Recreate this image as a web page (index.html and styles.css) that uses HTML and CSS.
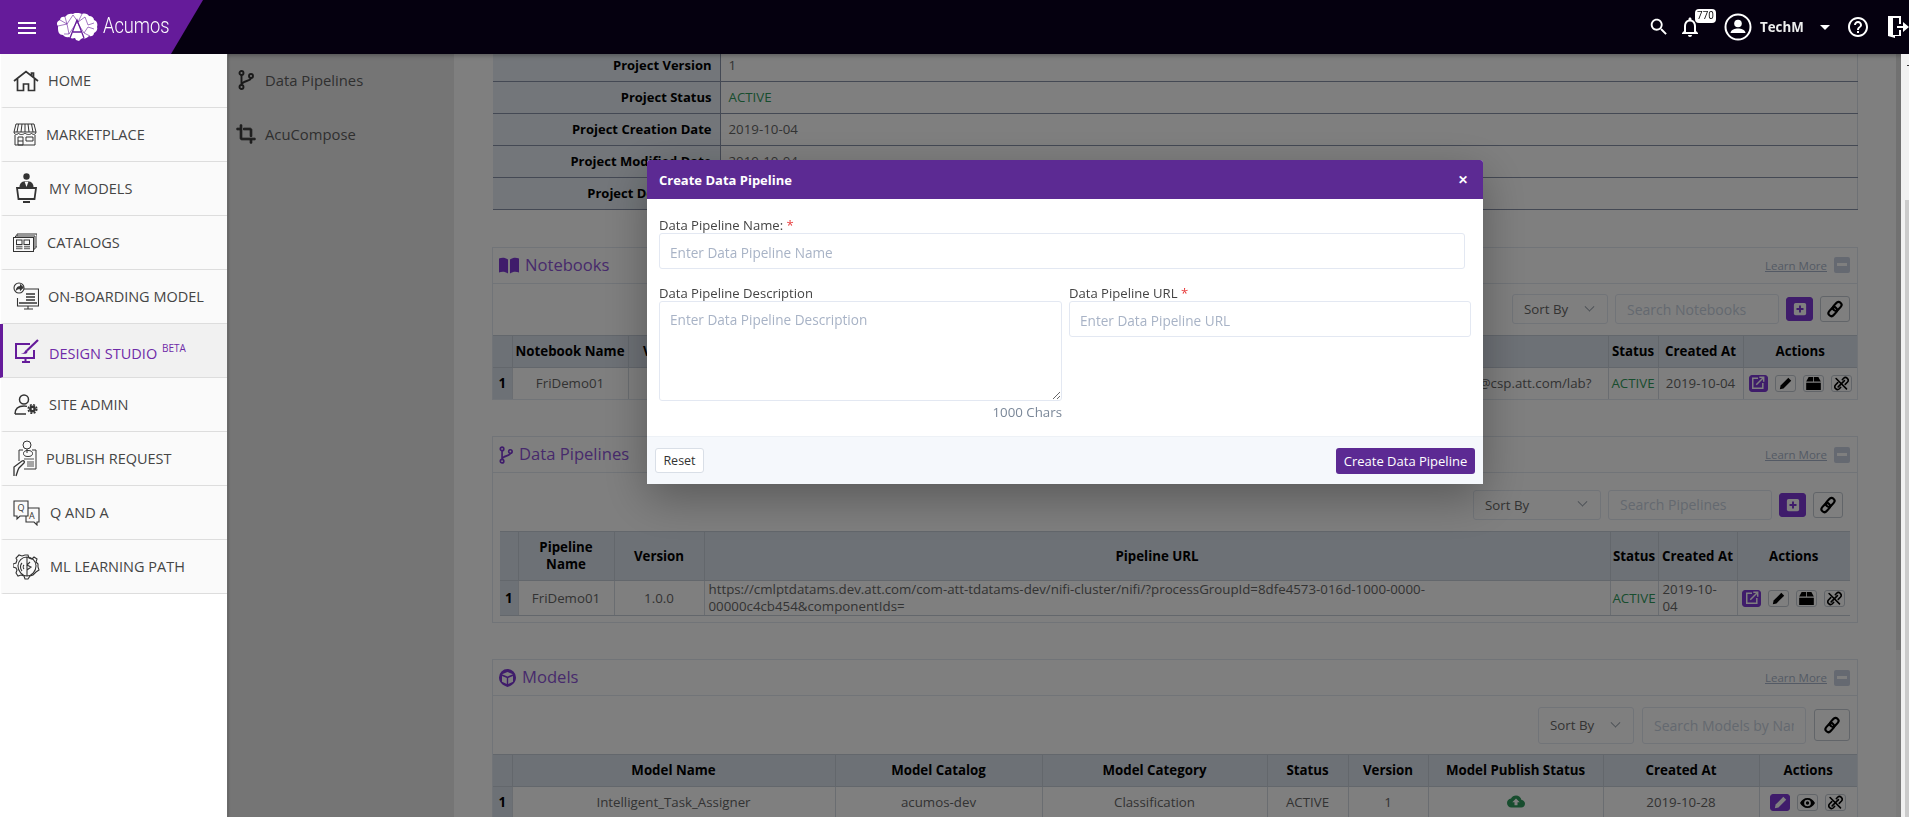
FILE: index.html
```html
<!DOCTYPE html>
<html lang="en">
<head>
<meta charset="utf-8">
<title>Acumos - Create Data Pipeline</title>
<link rel="stylesheet" href="styles.css">
</head>
<body>
<svg class="defs" width="0" height="0" aria-hidden="true">
  <symbol id="i-branch" viewBox="0 0 16 20"><g fill="none" stroke="currentColor" stroke-width="1.9"><circle cx="3.5" cy="3" r="2"/><circle cx="3.5" cy="17" r="2"/><circle cx="13" cy="6" r="2"/><path d="M3.5 5v10M13 8c0 3.5-9.5 2.5-9.5 7"/></g></symbol>
  <symbol id="i-link" viewBox="0 0 20 20"><g fill="none" stroke="currentColor" stroke-width="2.4"><rect x="9.2" y="1.6" width="6.6" height="11" rx="3.3" transform="rotate(42 12.5 7)"/><rect x="4.2" y="7.4" width="6.6" height="11" rx="3.3" transform="rotate(42 7.5 13)"/></g></symbol>
  <symbol id="i-plus" viewBox="0 0 16 16"><rect x="1" y="1" width="14" height="14" rx="2" fill="#fff"/><path d="M8 4v8M4 8h8" stroke="#7e38d6" stroke-width="2.2"/></symbol>
  <symbol id="i-open" viewBox="0 0 16 16"><g fill="none" stroke="#fff" stroke-width="1.7"><path d="M8 2.5H2v11.5h11.5V8"/><path d="M6 10 14 2M9.5 1.5h5v5"/></g></symbol>
  <symbol id="i-pencil" viewBox="0 0 16 16"><path d="M11.500 1 15 4.500 5.500 14 1 15l1-4.500z" fill="currentColor"/></symbol>
  <symbol id="i-box" viewBox="0 0 18 16"><path d="M3 0h5.500v5.500H0zM9.500 0H15l3 5.500H9.500zM0 7h18v9H0z" fill="currentColor"/></symbol>
  <symbol id="i-unlink" viewBox="0 0 18 18"><g fill="none" stroke="currentColor" stroke-width="1.900" stroke-linecap="round"><path d="M2.500 3 15 15.500"/><path d="M10 4.500l1.500-1.800a3.300 3.300 0 0 1 4.700 4.600L13.500 10"/><path d="M8 13.500l-1.500 1.800a3.300 3.300 0 0 1-4.700-4.600L4.500 8"/><path d="M12.500 5.500 5 13"/></g></symbol>
  <symbol id="i-eye" viewBox="0 0 18 12"><path d="M9 0C5 0 1.800 2.500 0 6c1.800 3.500 5 6 9 6s7.200-2.500 9-6c-1.800-3.500-5-6-9-6zm0 10a4 4 0 1 1 0-8 4 4 0 0 1 0 8zm0-6a2 2 0 1 0 0 4 2 2 0 0 0 0-4z" fill="currentColor"/></symbol>
</svg>

<header class="topbar">
  <div class="brand">
    <svg class="burger" width="24" height="24" viewBox="0 0 24 24"><path fill="#fff" d="M3 18h18v-2H3v2zm0-5h18v-2H3v2zm0-7v2h18V6H3z"/></svg>
    <svg class="brain" width="42" height="28" viewBox="0 0 42 28">
      <path fill="#fff" d="M2 13c-2-2-1-5 2-6 0-3 3-4 5-3 2-3 5-4 8-3 3-2 7-1 9 0 3-1 6 0 7 2 3 0 5 2 5 4 3 1 4 4 3 7 1 3-1 5-3 6 0 2-2 4-5 3-2 2-4 3-6 2l-2 1-2 2-3-1-1-2c-3 1-5 0-6-1-3 1-5-1-6-2-4 0-5-3-5-7z"/>
      <g fill="none" stroke="#651b9a" stroke-width=".6"><path d="M4 7l7 4 6-9 5 7 7-5 3 8 6-2M2 13l9-2 2 10 8-12 7 11 4-6 6 2M9 4l2 7M26 1l-4 8M8 21l5 0M28 20l6 3"/></g>
      <path d="M14 25 21 7l7 18M17 19h8" fill="none" stroke="#651b9a" stroke-width="1.300"/>
    </svg>
    <span class="wordmark">Acumos</span>
  </div>
  <div class="top-tools">
    <svg class="t-search" width="22" height="22" viewBox="0 0 24 24"><path fill="#fff" d="M15.500 14h-.79l-.28-.27C15.410 12.590 16 11.110 16 9.500 16 5.910 13.090 3 9.500 3S3 5.910 3 9.500 5.910 16 9.500 16c1.610 0 3.090-.59 4.230-1.570l.27.28v.79l5 4.990L20.490 19l-4.990-5zm-6 0C7.010 14 5 11.990 5 9.500S7.010 5 9.500 5 14 7.010 14 9.500 11.990 14 9.500 14z"/></svg>
    <div class="t-bell">
      <svg width="24" height="24" viewBox="0 0 24 24"><path fill="#fff" d="M12 22c1.100 0 2-.9 2-2h-4c0 1.100.89 2 2 2zm6-6v-5c0-3.070-1.640-5.640-4.500-6.320V4c0-.83-.67-1.500-1.500-1.500s-1.500.67-1.500 1.500v.68C7.630 5.360 6 7.920 6 11v5l-2 2v1h16v-1l-2-2zm-2 1H8v-6c0-2.480 1.510-4.500 4-4.500s4 2.020 4 4.500v6z"/></svg>
      <span class="badge">770</span>
    </div>
    <svg class="t-user" width="28" height="28" viewBox="0 0 28 28"><circle cx="14" cy="14" r="12.500" fill="none" stroke="#fff" stroke-width="2"/><circle cx="14" cy="10.500" r="3.800" fill="#fff"/><path fill="#fff" d="M6.500 20c.5-3.500 4.500-4.500 7.500-4.500s7 1 7.500 4.500z"/></svg>
    <span class="t-name">TechM</span>
    <span class="t-caret"></span>
    <svg class="t-help" width="24" height="24" viewBox="0 0 24 24"><path fill="#fff" d="M11 18h2v-2h-2v2zm1-16C6.480 2 2 6.480 2 12s4.480 10 10 10 10-4.480 10-10S17.520 2 12 2zm0 18c-4.410 0-8-3.590-8-8s3.590-8 8-8 8 3.590 8 8-3.590 8-8 8zm0-14c-2.210 0-4 1.790-4 4h2c0-1.100.9-2 2-2s2 .9 2 2c0 2-3 1.750-3 5h2c0-2.250 3-2.500 3-5 0-2.210-1.790-4-4-4z"/></svg>
    <svg class="t-exit" width="21" height="22" viewBox="0 0 21 22"><path fill="#fff" d="M0 0h13v8h-2V2H5v17h6v-5h2v6H7v2l-7-2z"/><path fill="#fff" d="M9 10h6V6l6 5-6 5v-4H9z"/></svg>
  </div>
</header>

<div class="stage">
  <nav class="sidebar">
    <a class="nav-item"><span class="nav-ic"><svg width="26" height="22" viewBox="0 0 26 22" fill="none" stroke="#333" stroke-width="1.700"><path d="M1 11 13 1.500 25 11M4.500 9v11.500h6V14h5v6.500h6V9M18.500 5V3h2v4"/></svg></span><span class="nav-tx o2">HOME</span></a>
    <a class="nav-item"><span class="nav-ic"><svg width="24" height="23" viewBox="0 0 24 23" fill="none" stroke="#333" stroke-width="1"><path d="M3 1h18l2 8H1zM5.500 1 4 9M9 1l-1 8M12 1v8M15 1l1 8M18.500 1 20 9M1 9c0 3 4 3 4.500 1 .5 2 5 2 6.500 0 1.500 2 6 2 6.500 0 .5 2 4.500 2 4.500-1M2 12v10h20V12M5 14h5v8H5zM5 18h5M13 14h7v4h-7z"/></svg></span><span class="nav-tx o0">MARKETPLACE</span></a>
    <a class="nav-item"><span class="nav-ic"><svg class="ind3" width="21" height="31" viewBox="0 0 21 31"><circle cx="10.500" cy="3.500" r="3.200" fill="#333"/><path d="M3.500 14c0-4 3-6 7-6s7 2 7 6z" fill="#333"/><path d="M8.500 8.500h4L10.500 14z" fill="#fafafa"/><path d="M1 15h19l-1.500 11h-16z" fill="#fafafa" stroke="#333" stroke-width="1.800"/><path d="M7 29h7" stroke="#333" stroke-width="2"/></svg></span><span class="nav-tx o3">MY MODELS</span></a>
    <a class="nav-item"><span class="nav-ic"><svg width="24" height="19" viewBox="0 0 24 19" fill="none" stroke="#333" stroke-width="1"><path d="M4 3V1h20v13h-1.500M2.500 4.500V3H22v13h-1"/><rect x=".5" y="4.500" width="20" height="14"/><rect x="3.500" y="7" width="5.500" height="4.500"/><rect x="11" y="7" width="5.500" height="4.500"/><path d="M3 13.500h6.500M3 15.500h6.500M11 13.500h6M11 15.500h6" stroke="#777" stroke-width="1.300"/></svg></span><span class="nav-tx o1">CATALOGS</span></a>
    <a class="nav-item"><span class="nav-ic"><svg width="26" height="30" viewBox="0 0 26 30" fill="none" stroke="#333" stroke-width="1.100"><path d="M11 7h14.500v17h-21V16"/><circle cx="6" cy="6" r="5" fill="#fafafa"/><path d="M3.500 7.500c.5-2 2-3 4-3V3l2.500 2.500L7.500 8V6.500c-1.500 0-3 0-4 1z" fill="#333"/><path d="M13 12h9M13 15h9M13 18h9M6 21h18" stroke-width="1.300"/><path d="M11 27h9M15 24v3"/></svg></span><span class="nav-tx o2">ON-BOARDING MODEL</span></a>
    <a class="nav-item active"><span class="nav-ic"><svg class="ind2" width="24" height="24" viewBox="0 0 24 24" fill="none" stroke="#651b9a" stroke-width="2"><path d="M15 5H1v14h18v-8"/><path d="M7 23h8M10.500 19v4"/><path d="M23 1 12 11.500" stroke-width="2.200"/><path d="M6 14c2.500.5 3.500-.5 4-2 1-2 3-.5 2.500 1-.5 2-4 2.500-6.500 1z" fill="#651b9a" stroke="none"/></svg></span><span class="nav-tx o3">DESIGN STUDIO <sup class="beta">BETA</sup></span></a>
    <a class="nav-item"><span class="nav-ic"><svg class="ind1" width="24" height="21" viewBox="0 0 24 21" fill="none" stroke="#333" stroke-width="1.500"><circle cx="10" cy="5.500" r="4.500"/><path d="M1 20c0-6 4-8 9-8 1 0 2 .1 3 .4M1 20h11"/><circle cx="18.500" cy="15" r="2.200" stroke-width="2.500"/><circle cx="18.500" cy="15" r="4.300" stroke-width="1.500" stroke-dasharray="2 1.400"/></svg></span><span class="nav-tx o3">SITE ADMIN</span></a>
    <a class="nav-item"><span class="nav-ic"><svg width="24" height="37" viewBox="0 0 24 37" fill="none" stroke="#333" stroke-width="1"><circle cx="14" cy="5" r="4"/><ellipse cx="15" cy="13.500" rx="4.500" ry="3"/><path d="M14 9v4M6 10h4M19 10h4v19H11M6 10v11"/><path d="M11 19h10M14 22h7M14 24h7M14 26h7" stroke="#888" stroke-width="1.300"/><path d="M1 36v-9l8-6c2-1 3 1 2 2l-5 5-1 2-2 6" stroke-width="1.300"/></svg></span><span class="nav-tx o0">PUBLISH REQUEST</span></a>
    <a class="nav-item"><span class="nav-ic"><svg width="27" height="26" viewBox="0 0 27 26" fill="none" stroke="#333" stroke-width="1.100"><path d="M1 1h14v15H7l-3 3v-3H1zM15 8h11v14h-2v3l-3-3h-8v-6"/><text x="4.500" y="11" class="ic-tx">Q</text><text x="16" y="19" class="ic-tx">A</text></svg></span><span class="nav-tx o4">Q AND A</span></a>
    <a class="nav-item"><span class="nav-ic"><svg width="28" height="26" viewBox="0 0 28 26" fill="none" stroke="#333" stroke-width="1.100"><path d="M12 1h3l1 3 3 1 2-2 3 2-1 3 2 2v3l1 3-3 2-3 3-3 1-2 3h-3l-1-3-3-1-3 1-2-3 1-3-1-2-3-1v-3l3-1 1-3-1-2 3-3 3 1z"/><path d="M14 3c-5 0-9 4-9 9s4 10 9 10M14 3c5 0 9 4 9 9s-4 10-9 10V3M17 8l-3 3 4 2-4 3M9 9c-2 2-2 6 0 8M11 11c-1 1-1 3 0 4"/></svg></span><span class="nav-tx o4">ML LEARNING PATH</span></a>
  </nav>

  <aside class="subnav">
    <a class="sub-item"><svg class="sub-ic branch" width="16" height="20"><use href="#i-branch"/></svg>Data Pipelines</a>
    <a class="sub-item"><svg class="sub-ic crop" width="20" height="20" viewBox="0 0 24 24"><path fill="currentColor" stroke="currentColor" stroke-width="1.100" d="M17 15h2V7c0-1.100-.9-2-2-2H9v2h8v8zM7 17V1H5v4H1v2h4v10c0 1.100.9 2 2 2h10v4h2v-4h4v-2H7z"/></svg>AcuCompose</a>
  </aside>

  <main class="main">
    <div class="main-inner">
      <table class="info">
        <tr><th>Project Version</th><td>1</td></tr>
        <tr><th>Project Status</th><td class="ok">ACTIVE</td></tr>
        <tr><th>Project Creation Date</th><td>2019-10-04</td></tr>
        <tr><th>Project Modified Date</th><td>2019-10-04</td></tr>
        <tr><th>Project Description</th><td></td></tr>
      </table>

      <section class="card">
        <div class="card-head">
          <h2 class="card-title"><svg class="ttl-ic" width="20" height="17" viewBox="0 0 20 16"><path fill="currentColor" d="M0 1c3-1 6-1 9 1v14c-3-2-6-2-9-1zM20 1c-3-1-6-1-9 1v14c3-2 6-2 9-1z"/></svg>Notebooks</h2>
          <a class="learn">Learn More</a><span class="collapse"></span>
        </div>
        <div class="tools tools-nb">
          <div class="select s-96">Sort By<span class="chev"></span></div>
          <input class="search" placeholder="Search Notebooks">
          <button class="tool primary"><svg width="14" height="14"><use href="#i-plus"/></svg></button>
          <button class="tool"><svg width="18" height="18"><use href="#i-link"/></svg></button>
        </div>
        <table class="grid nb flush">
          <colgroup><col class="c19"><col class="c116"><col class="c80"><col><col class="c50"><col class="c85"><col class="c114"></colgroup>
          <thead><tr><th></th><th>Notebook Name</th><th>Version</th><th>Notebook URL</th><th>Status</th><th>Created At</th><th>Actions</th></tr></thead>
          <tbody><tr><th class="num">1</th><td>FriDemo01</td><td>1.0.0</td><td class="right">https://jupyterhub@csp.att.com/lab?</td><td class="ok tight">ACTIVE</td><td>2019-10-04</td><td>
            <div class="acts"><span class="act purple"><svg width="14" height="14"><use href="#i-open"/></svg></span><span class="act"><svg width="13" height="13"><use href="#i-pencil"/></svg></span><span class="act"><svg width="15" height="13"><use href="#i-box"/></svg></span><span class="act"><svg width="15" height="15"><use href="#i-unlink"/></svg></span></div>
          </td></tr></tbody>
        </table>
      </section>

      <section class="card padded">
        <div class="card-head">
          <h2 class="card-title"><svg class="ttl-ic" width="14" height="18"><use href="#i-branch"/></svg>Data Pipelines</h2>
          <a class="learn">Learn More</a><span class="collapse"></span>
        </div>
        <div class="tools tools-dp">
          <div class="select s-128">Sort By<span class="chev"></span></div>
          <input class="search" placeholder="Search Pipelines">
          <button class="tool primary"><svg width="14" height="14"><use href="#i-plus"/></svg></button>
          <button class="tool"><svg width="18" height="18"><use href="#i-link"/></svg></button>
        </div>
        <table class="grid dp">
          <colgroup><col class="c18"><col class="c96"><col class="c90"><col><col class="c48"><col class="c79"><col class="c113"></colgroup>
          <thead><tr><th></th><th>Pipeline<br>Name</th><th>Version</th><th>Pipeline URL</th><th>Status</th><th>Created At</th><th>Actions</th></tr></thead>
          <tbody><tr><th class="num">1</th><td>FriDemo01</td><td>1.0.0</td><td class="left">https://cmlptdatams.dev.att.com/com-att-tdatams-dev/nifi-cluster/nifi/?processGroupId=8dfe4573-016d-1000-0000-<br>00000c4cb454&amp;componentIds=</td><td class="ok tight">ACTIVE</td><td class="left">2019-10-<br>04</td><td>
            <div class="acts"><span class="act purple"><svg width="14" height="14"><use href="#i-open"/></svg></span><span class="act"><svg width="13" height="13"><use href="#i-pencil"/></svg></span><span class="act"><svg width="15" height="13"><use href="#i-box"/></svg></span><span class="act"><svg width="15" height="15"><use href="#i-unlink"/></svg></span></div>
          </td></tr></tbody>
        </table>
      </section>

      <section class="card">
        <div class="card-head">
          <h2 class="card-title"><svg class="ttl-ic" width="17" height="18" viewBox="0 0 17 18"><path fill="currentColor" d="M8.500 0a8.500 8.500 0 0 1 8.500 8.500c0 5-4 8-8.500 9.500C4 16.500 0 13.500 0 8.500A8.500 8.500 0 0 1 8.500 0z"/><path fill="#fff" d="M8.500 3 14 5.200 8.500 7.500 3 5.200zM3 7l4.800 2v6L3 12.800zM14 7 9.200 9v6l4.800-2.200z"/></svg>Models</h2>
          <a class="learn">Learn More</a><span class="collapse"></span>
        </div>
        <div class="tools tools-md">
          <div class="select s-96 tall">Sort By<span class="chev"></span></div>
          <input class="search tall" placeholder="Search Models by Name">
          <button class="tool wide"><svg width="18" height="18"><use href="#i-link"/></svg></button>
        </div>
        <table class="grid md flush">
          <colgroup><col class="c19"><col class="c323"><col class="c207"><col class="c225"><col class="c81"><col class="c80"><col class="c175"><col class="c156"><col></colgroup>
          <thead><tr><th></th><th>Model Name</th><th>Model Catalog</th><th>Model Category</th><th>Status</th><th>Version</th><th>Model Publish Status</th><th>Created At</th><th>Actions</th></tr></thead>
          <tbody><tr><th class="num">1</th><td>Intelligent_Task_Assigner</td><td>acumos-dev</td><td>Classification</td><td>ACTIVE</td><td>1</td><td><svg class="cloud" width="18" height="16" viewBox="0 0 24 20"><path fill="currentColor" d="M19.350 6.040C18.670 2.590 15.640 0 12 0 9.110 0 6.600 1.640 5.350 4.040 2.340 4.360 0 6.910 0 10c0 3.310 2.690 6 6 6h13c2.760 0 5-2.240 5-5 0-2.640-2.050-4.780-4.650-4.960zM14 9v4h-4V9H7l5-5 5 5h-3z"/></svg></td><td>2019-10-28</td><td>
            <div class="acts"><span class="act purple big"><svg width="13" height="13"><use href="#i-pencil"/></svg></span><span class="act"><svg width="15" height="10"><use href="#i-eye"/></svg></span><span class="act"><svg width="15" height="15"><use href="#i-unlink"/></svg></span></div>
          </td></tr></tbody>
        </table>
      </section>
    </div>
  </main>
  <div class="scroll-track"><div class="scroll-thumb"></div></div>
  <div class="scroll-edge"><i class="edge-dash"></i><div class="edge-grey"></div></div>
</div>

<div class="backdrop"></div>

<div class="modal" role="dialog">
  <div class="modal-head"><span>Create Data Pipeline</span><span class="modal-x">&#10005;</span></div>
  <div class="modal-body">
    <label class="lbl">Data Pipeline Name: <em>*</em></label>
    <input class="field" placeholder="Enter Data Pipeline Name">
    <div class="modal-cols">
      <div class="col-desc">
        <label class="lbl">Data Pipeline Description</label>
        <textarea class="field area" placeholder="Enter Data Pipeline Description"></textarea>
        <div class="chars">1000 Chars</div>
      </div>
      <div class="col-url">
        <label class="lbl">Data Pipeline URL <em>*</em></label>
        <input class="field" placeholder="Enter Data Pipeline URL">
      </div>
    </div>
  </div>
  <div class="modal-foot">
    <button class="btn-reset">Reset</button>
    <button class="btn-create">Create Data Pipeline</button>
  </div>
</div>
</body>
</html>
```

FILE: styles.css
```css
* { box-sizing: border-box; }
html, body { height: 100%; }
body {
  margin: 0;
  height: 817px;
  overflow: hidden;
  font-family: "Open Sans", "Noto Sans", sans-serif;
  font-size: 13.300px;
  color: #666;
  background: #fff;
}
.defs { position: absolute; }
a { text-decoration: none; }
h2 { margin: 0; font-weight: 400; }
button, input, textarea { font-family: inherit; }

/* top bar */
.topbar {
  position: relative;
  z-index: 30;
  height: 54px;
  display: flex;
  justify-content: space-between;
  background: #05000f;
  box-shadow: 0 2px 4px rgba(0, 0, 0, .25);
}
.brand {
  width: 203px;
  display: flex;
  align-items: center;
  background: #651b9a;
  clip-path: polygon(0 0, 100% 0, 171px 100%, 0 100%);
  padding-left: 15px;
}
.burger { flex: none; margin-top: 2px; }
.brain { flex: none; margin-left: 17px; }
.wordmark {
  margin-left: 5px;
  font-family: Roboto, sans-serif;
  font-weight: 300;
  font-size: 22px;
  line-height: 1;
  color: #fff;
  display: inline-block;
  transform: scaleX(.83);
  transform-origin: left center;
  margin-top: -2px;
}
.top-tools { display: flex; align-items: center; }
.t-search { margin-right: 8px; }
.t-bell { position: relative; width: 24px; height: 24px; margin-right: 22px; }
.t-bell svg { display: block; }
.badge {
  position: absolute;
  left: 17px;
  top: -6px;
  width: 21px;
  height: 14px;
  border-radius: 4px;
  background: #fff;
  color: #111;
  font-family: Roboto, sans-serif;
  font-size: 10px;
  line-height: 14px;
  text-align: center;
}
.t-user { margin-right: 8px; }
.t-name { color: #eee; font-weight: 700; font-size: 13.300px; width: 60px; }
.t-caret {
  width: 0;
  height: 0;
  border-left: 5.500px solid transparent;
  border-right: 5.500px solid transparent;
  border-top: 5.500px solid #fff;
  margin-right: 16px;
}
.t-help { margin-right: 18px; }

/* shell */
.stage { display: flex; height: 763px; }
.sidebar {
  position: relative;
  z-index: 30;
  flex: 0 0 228px;
  background: #fff;
  border-right: 1px solid #6a6a6a;
}
.nav-item {
  height: 54px;
  display: flex;
  align-items: center;
  padding-left: 10px;
  margin-left: 1px;
  border-left: 2px solid transparent;
  background: #fafafa;
  border-bottom: 1px solid #ddd;
  color: #454545;
  font-size: 14.500px;
}
.nav-item.active { background: #f1f1f1; color: #6f2ba8; border-left: 3px solid #651b9a; margin-left: 0; }
.nav-ic { flex: 0 0 33px; display: flex; align-items: center; }
.nav-ic svg { display: block; }
.ind1 { margin-left: 1px; }
.ind2 { margin-left: 2px; }
.ind3 { margin-left: 3px; }
.ic-tx { font-family: "Open Sans", sans-serif; font-size: 9px; fill: #333; stroke: none; }
.o0 { margin-left: 0; }
.o1 { margin-left: 1px; }
.o2 { margin-left: 2px; }
.o3 { margin-left: 3px; }
.o4 { margin-left: 4px; }
.nav-item.active .o3 { padding-top: 5px; }
.beta { font-size: 10px; vertical-align: 7px; line-height: 0; margin-left: 1px; }

.subnav {
  flex: 0 0 226px;
  background: #ebebeb;
  font-size: 14.800px;
  box-shadow: inset 2px 0 2px -1px rgba(0, 0, 0, .15);
}
.sub-item { height: 54px; display: flex; align-items: center; padding-left: 8px; color: #5f5f5f; padding-bottom: 2px; }
.sub-ic { color: #333; flex: none; }
.branch { margin-left: 2px; margin-right: 11px; }
.crop { margin-right: 9px; }

.main { flex: 1 1 auto; min-width: 0; overflow: hidden; background: #fff; }
.main-inner { margin-top: -5px; padding: 0 38px; }
.scroll-track { flex: 0 0 5px; background: #f4f4f4; }
.scroll-thumb { height: 596px; background: #e2e2e2; }
.scroll-edge {
  position: relative;
  z-index: 30;
  flex: 0 0 8px;
  background: #f1f1f1;
  padding-top: 146px;
}
.edge-dash { position: absolute; left: 6px; top: 11px; width: 2px; height: 1px; background: #333; }
.edge-grey { height: 617px; margin-left: 4px; background: #cbcbcb; }

/* info table */
.info { width: 1365px; margin-left: 1px; border-collapse: collapse; table-layout: fixed; }
.info th, .info td { height: 32px; padding: 1px 8px 0; border-bottom: 1px solid #8992a8; line-height: 17px; }
.info th { width: 227px; text-align: right; font-weight: 700; font-size: 13px; color: #000; background: #e6edf4; border-right: 1px solid #8992a8; }
.info td { border-right: 1px solid #dce2ea; }
.info .ok, .grid .ok { color: #2f9a5c; }

/* cards */
.card {
  margin-top: 37px;
  border: 1px solid #e2e8f0;
  width: 1366px;
}
.card + .card { margin-top: 36px; }
.card-head {
  height: 36px;
  display: flex;
  align-items: center;
  padding: 0 7px 0 6px;
  border-bottom: 1px solid #e2e8f0;
}
.card-title {
  flex: 1;
  display: flex;
  align-items: center;
  font-size: 16.600px;
  color: #8f55d8;
  line-height: 1;
}
.ttl-ic { color: #7e38d6; margin-right: 6px; flex: none; }
.learn { color: #a9b5ca; font-size: 11.500px; text-decoration: underline; margin-right: 7px; }
.collapse { width: 16px; height: 16px; border-radius: 2px; background: #cbd3e3; position: relative; }
.collapse::after { content: ""; position: absolute; left: 3px; right: 3px; top: 6px; height: 3px; background: #fff; }

.tools { display: flex; align-items: center; justify-content: flex-end; }
.tools-nb { height: 51px; gap: 7px; padding-right: 7px; }
.tools-dp { height: 58px; gap: 7px; padding: 5px 14px 0 0; }
.tools-md { height: 58px; gap: 8px; padding-right: 7px; }
.select {
  height: 30px;
  display: flex;
  align-items: center;
  justify-content: space-between;
  padding: 0 14px 0 11px;
  border: 1px solid #e2e8f0;
  border-radius: 3px;
  color: #666;
}
.s-96 { width: 96px; }
.s-128 { width: 128px; }
.chev { width: 7px; height: 7px; border-right: 1.500px solid #9aa3ad; border-bottom: 1.500px solid #9aa3ad; transform: rotate(45deg) translate(-2px, -2px); }
.search {
  width: 164px;
  height: 30px;
  padding: 0 11px;
  border: 1px solid #e2e8f0;
  border-radius: 3px;
  background: transparent;
  font-size: 14px;
  outline: 0;
}
.search::placeholder { color: #c8d2e0; opacity: 1; }
.tall { height: 37px; }
.tool {
  width: 30px;
  height: 26px;
  padding: 0;
  display: flex;
  align-items: center;
  justify-content: center;
  background: #fff;
  color: #000;
  border: 1px solid #c4cad3;
  border-radius: 3px;
}
.tool.primary { width: 27px; height: 24px; background: #7e38d6; border-color: #7e38d6; }
.tool.wide { width: 36px; height: 32px; }

/* data tables */
.grid { width: 100%; border-collapse: collapse; table-layout: fixed; }
.grid th, .grid td { text-align: center; line-height: 17px; padding: 0 4px; border-right: 1px solid #d5dbe2; }
.grid th:last-child, .grid td:last-child { border-right: 0; }
.grid thead th { height: 32px; padding: 0; background: #dbe2ec; color: #000; font-weight: 700; white-space: nowrap; border-top: 1px solid #c6ced9; border-bottom: 1px solid #c6ced9; border-right-color: #c6ced9; }
.grid tbody td, .grid tbody th { height: 32px; border-bottom: 1px solid #c6ced9; }
.flush tbody td, .flush tbody th { border-bottom: 0; }
.grid .num { background: #dbe2ec; color: #000; font-weight: 700; }
.grid .left { text-align: left; }
.grid .right { text-align: right; padding-right: 16px; white-space: nowrap; overflow: hidden; }
.grid .tight { padding: 0; }
.dp thead th { height: 49px; }
.dp tbody td, .dp tbody th { height: 35px; }
.padded { padding-bottom: 6px; }
.padded .grid { width: 1350px; margin-left: 7px; }
.c18 { width: 18px; } .c19 { width: 19px; } .c48 { width: 48px; } .c50 { width: 50px; }
.c79 { width: 79px; } .c80 { width: 80px; } .c81 { width: 81px; } .c85 { width: 85px; }
.c90 { width: 90px; } .c96 { width: 96px; } .c113 { width: 113px; } .c114 { width: 114px; }
.c116 { width: 116px; } .c156 { width: 156px; } .c175 { width: 175px; } .c207 { width: 207px; }
.c225 { width: 225px; } .c323 { width: 323px; }
.acts { display: flex; justify-content: center; gap: 7px; }
.act {
  width: 21px;
  height: 17px;
  display: flex;
  align-items: center;
  justify-content: center;
  border: 1px solid #c4cad3;
  border-radius: 3px;
  background: #fff;
  color: #000;
}
.act.purple { width: 19px; background: #7e38d6; border-color: #7e38d6; color: #fff; }
.act.big { width: 20px; }
.cloud { color: #2f9a5c; display: block; margin: 0 auto; }

/* dim layer */
.backdrop { position: fixed; inset: 0; z-index: 10; background: rgba(0, 0, 0, .5); }

/* modal */
.modal {
  position: fixed;
  z-index: 20;
  left: 647px;
  top: 160px;
  width: 836px;
  height: 324px;
  display: flex;
  flex-direction: column;
  background: #fff;
  box-shadow: 0 14px 45px rgba(0, 0, 0, .3);
  border-radius: 3px 3px 0 0;
}
.modal-head {
  height: 39px;
  flex: none;
  display: flex;
  align-items: center;
  justify-content: space-between;
  padding: 0 15px 0 12px;
  background: #5c2a93;
  color: #fff;
  font-weight: 700;
  font-size: 13px;
  border-radius: 3px 3px 0 0;
}
.modal-x { font-size: 12px; }
.modal-body { flex: 1; padding: 18px 12px 0; }
.lbl { display: block; height: 16px; line-height: 17px; color: #444; font-size: 13.100px; }
.lbl em { color: #e83c3c; font-style: normal; }
.field {
  display: block;
  width: 806px;
  height: 36px;
  padding: 2px 10px 0;
  border: 1px solid #e3e8f2;
  border-radius: 3px;
  background: #fff;
  font-size: 13.600px;
  outline: 0;
}
.field::placeholder { color: #a8b3c6; opacity: 1; }
.modal-cols { display: flex; gap: 7px; margin-top: 16px; }
.col-desc { width: 403px; }
.col-url { width: 402px; }
.col-desc .field, .col-url .field { width: 100%; }
.area { height: 100px; padding-top: 9px; resize: both; line-height: 17px; }
.chars { text-align: right; color: #7a8798; font-size: 13.300px; line-height: 16px; margin-top: 3px; }
.modal-foot {
  height: 48px;
  flex: none;
  display: flex;
  align-items: center;
  justify-content: space-between;
  padding: 0 8px;
  background: #f5f8fc;
  border-top: 1px solid #edf1f6;
}
.btn-reset {
  width: 49px;
  height: 25px;
  padding: 0;
  border: 1px solid #d9dfe7;
  border-radius: 3px;
  background: #fff;
  color: #333;
  font-size: 12.500px;
}
.btn-create {
  width: 139px;
  height: 26px;
  padding: 0;
  border: 0;
  border-radius: 3px;
  background: #5c2a93;
  color: #fff;
  font-size: 13px;
}
```
